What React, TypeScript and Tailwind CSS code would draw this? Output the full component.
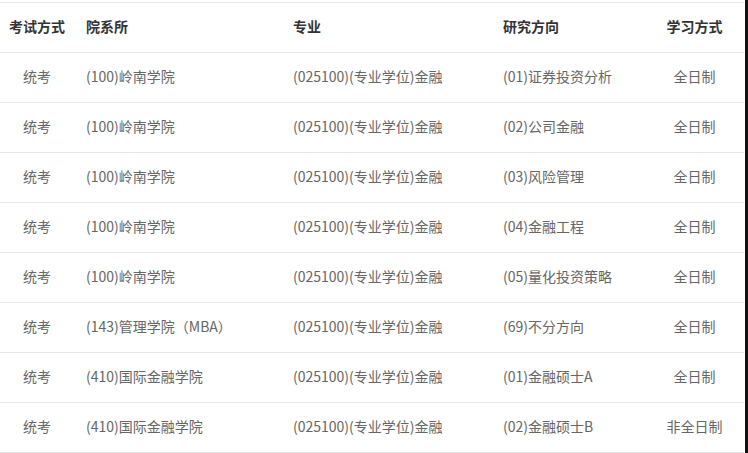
const rows = [
  ["统考", "(100)岭南学院", "(025100)(专业学位)金融", "(01)证券投资分析", "全日制"],
  ["统考", "(100)岭南学院", "(025100)(专业学位)金融", "(02)公司金融", "全日制"],
  ["统考", "(100)岭南学院", "(025100)(专业学位)金融", "(03)风险管理", "全日制"],
  ["统考", "(100)岭南学院", "(025100)(专业学位)金融", "(04)金融工程", "全日制"],
  ["统考", "(100)岭南学院", "(025100)(专业学位)金融", "(05)量化投资策略", "全日制"],
  ["统考", "(143)管理学院（MBA）", "(025100)(专业学位)金融", "(69)不分方向", "全日制"],
  ["统考", "(410)国际金融学院", "(025100)(专业学位)金融", "(01)金融硕士A", "全日制"],
  ["统考", "(410)国际金融学院", "(025100)(专业学位)金融", "(02)金融硕士B", "非全日制"],
];

const head = ["考试方式", "院系所", "专业", "研究方向", "学习方式"];

const gridCls = "grid grid-cols-[74px_207px_210px_154px_1fr] border-b border-[#e6e6e6]";

export default function App() {
  return (
    <div className="w-[748px] h-[453px] bg-white flex overflow-hidden" style={{ fontFamily: '"Noto Sans CJK SC", "Noto Sans", sans-serif' }}>
      <div className="w-[744px] pt-[2px]">
        <div className="border-t border-[#e6e6e6]">
          <div className={`${gridCls} h-[50px] items-center pb-[2px] text-[14px] font-bold text-[#333]`}>
            {head.map((h, i) => (
              <div key={h} className={i === 0 || i === 4 ? "text-center" : "pl-3"}>{h}</div>
            ))}
          </div>
          {rows.map((r, ri) => (
            <div key={ri} className={`${gridCls} h-[50px] items-center pb-[2px] text-[14px] text-[#666]`}>
              {r.map((c, i) => (
                <div key={i} className={i === 0 || i === 4 ? "text-center" : "pl-3"}>{c}</div>
              ))}
            </div>
          ))}
        </div>
      </div>
      <div className="w-px bg-white" />
      <div className="flex-1 bg-[#111]" />
    </div>
  );
}
